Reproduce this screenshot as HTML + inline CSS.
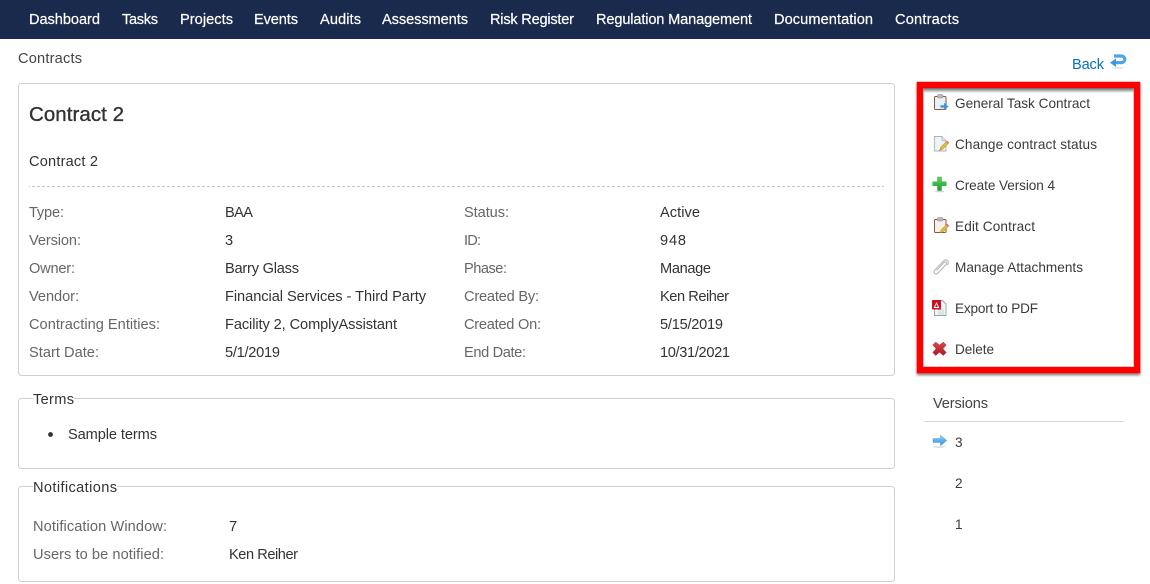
<!DOCTYPE html>
<html lang="en">
<head>
<meta charset="utf-8">
<title>Contracts</title>
<style>
html,body{margin:0;padding:0;width:1150px;height:584px;overflow:hidden;background:#fff}
svg{display:block;position:absolute;left:0;top:0}
text{font-family:"Liberation Sans",sans-serif;font-size:14.6px;fill:#333}
.n{fill:#fff;stroke:#fff;stroke-width:.2}
.l{fill:#666}
.v{fill:#333}
.s{font-size:13.6px;fill:#3a3a3a}
</style>
</head>
<body>
<svg width="1150" height="584" viewBox="0 0 1150 584" xmlns="http://www.w3.org/2000/svg">
<defs>
<filter id="sh" x="-10%" y="-10%" width="120%" height="120%"><feDropShadow dx="0" dy="2" stdDeviation="1.200" flood-color="#000" flood-opacity=".5"/></filter>
<linearGradient id="blue" x1="0" y1="0" x2="0" y2="1"><stop offset="0" stop-color="#8fd0f5"/><stop offset="1" stop-color="#2f8fdc"/></linearGradient>
<linearGradient id="green" x1="0" y1="0" x2="0" y2="1"><stop offset="0" stop-color="#5fd35f"/><stop offset="1" stop-color="#1f9e32"/></linearGradient>
<linearGradient id="red" x1="0" y1="0" x2="0" y2="1"><stop offset="0" stop-color="#d84a4a"/><stop offset="1" stop-color="#a81822"/></linearGradient>
<linearGradient id="topsh" x1="0" y1="0" x2="0" y2="1"><stop offset="0" stop-color="#666"/><stop offset="1" stop-color="#fff"/></linearGradient>
</defs>

<rect x="0" y="0" width="1150" height="39" fill="#192a4d"/>
<text class="n" x="29" y="24" textLength="71">Dashboard</text>
<text class="n" x="122" y="24" textLength="36">Tasks</text>
<text class="n" x="180" y="24" textLength="53">Projects</text>
<text class="n" x="254" y="24" textLength="44">Events</text>
<text class="n" x="320" y="24" textLength="41">Audits</text>
<text class="n" x="382" y="24" textLength="86">Assessments</text>
<text class="n" x="490" y="24" textLength="84">Risk Register</text>
<text class="n" x="596" y="24" textLength="156">Regulation Management</text>
<text class="n" x="774" y="24" textLength="99">Documentation</text>
<text class="n" x="895" y="24" textLength="64">Contracts</text>

<text x="18" y="63" textLength="64" style="fill:#444">Contracts</text>
<text x="1072" y="69" textLength="32" style="fill:#0a6ebd">Back</text>
<g>
<path d="M1114 56h7.500a3.300 3.300 0 0 1 0 6.600h-6.500" fill="none" stroke="#4aa5e8" stroke-width="3.200"/>
<path d="M1110 62.700l6-4.300v8.600z" fill="#3d97dc"/>
<ellipse cx="1118" cy="68" rx="6" ry=".8" fill="#ccc" opacity=".6"/>
</g>

<rect x="18.500" y="83.500" width="876" height="292" rx="3" fill="#fff" stroke="#d0d0d0"/>
<text x="29" y="121" textLength="95" style="font-size:20.500px;fill:#333;stroke:#333;stroke-width:.35">Contract 2</text>
<text x="29" y="166" textLength="69">Contract 2</text>
<line x1="29" y1="186.500" x2="884" y2="186.500" stroke="#c4c4c4" stroke-dasharray="3 2" stroke-dashoffset="2"/>

<text class="l" x="29" y="217" textLength="35">Type:</text>
<text class="v" x="225" y="217" textLength="28">BAA</text>
<text class="l" x="464" y="217" textLength="45">Status:</text>
<text class="v" x="660" y="217" textLength="40">Active</text>

<text class="l" x="29" y="245" textLength="52">Version:</text>
<text class="v" x="225" y="245" textLength="8">3</text>
<text class="l" x="464" y="245" textLength="17">ID:</text>
<text class="v" x="660" y="245" textLength="26">948</text>

<text class="l" x="29" y="273" textLength="46">Owner:</text>
<text class="v" x="225" y="273" textLength="74">Barry Glass</text>
<text class="l" x="464" y="273" textLength="43">Phase:</text>
<text class="v" x="660" y="273" textLength="51">Manage</text>

<text class="l" x="29" y="301" textLength="50">Vendor:</text>
<text class="v" x="225" y="301" textLength="201">Financial Services - Third Party</text>
<text class="l" x="464" y="301" textLength="75">Created By:</text>
<text class="v" x="660" y="301" textLength="69">Ken Reiher</text>

<text class="l" x="29" y="329" textLength="131">Contracting Entities:</text>
<text class="v" x="225" y="329" textLength="172">Facility 2, ComplyAssistant</text>
<text class="l" x="464" y="329" textLength="77">Created On:</text>
<text class="v" x="660" y="329" textLength="63">5/15/2019</text>

<text class="l" x="29" y="357" textLength="70">Start Date:</text>
<text class="v" x="225" y="357" textLength="55">5/1/2019</text>
<text class="l" x="464" y="357" textLength="62">End Date:</text>
<text class="v" x="660" y="357" textLength="70">10/31/2021</text>

<rect x="18.500" y="398.500" width="876" height="70" rx="3" fill="#fff" stroke="#d0d0d0"/>
<rect x="33" y="395" width="41" height="8" fill="#fff"/>
<text x="33" y="404" textLength="41">Terms</text>
<circle cx="50.500" cy="434.500" r="2.400" fill="#333"/>
<text x="68" y="439" textLength="89">Sample terms</text>

<rect x="18.500" y="486.500" width="876" height="95" rx="3" fill="#fff" stroke="#d0d0d0"/>
<rect x="33" y="483" width="84" height="8" fill="#fff"/>
<text x="33" y="492" textLength="84">Notifications</text>
<text class="l" x="33" y="531" textLength="134">Notification Window:</text>
<text class="v" x="229" y="531" textLength="8">7</text>
<text class="l" x="33" y="559" textLength="131">Users to be notified:</text>
<text class="v" x="229" y="559" textLength="69">Ken Reiher</text>

<rect x="920" y="85" width="217" height="285" fill="#fff" stroke="#f00" stroke-width="6.500" filter="url(#sh)"/>
<rect x="923.500" y="88" width="210" height="5" fill="url(#topsh)"/>

<text class="s" x="955" y="108" textLength="135">General Task Contract</text>
<text class="s" x="955" y="149" textLength="142">Change contract status</text>
<text class="s" x="955" y="190" textLength="100">Create Version 4</text>
<text class="s" x="955" y="231" textLength="80">Edit Contract</text>
<text class="s" x="955" y="272" textLength="128">Manage Attachments</text>
<text class="s" x="955" y="313" textLength="83">Export to PDF</text>
<text class="s" x="955" y="354" textLength="39">Delete</text>

<!-- clipboard arrow -->
<g>
<rect x="934.500" y="96.500" width="11.500" height="13" rx="1" fill="#eaf1f5" stroke="#8a5a3c"/>
<rect x="937.500" y="94.500" width="5.500" height="3.500" rx="1" fill="#b9b9b9" stroke="#888" stroke-width=".5"/>
<path d="M940.500 105.200h3.500v-2.500l4.500 3.800-4.500 3.800v-2.500h-3.500z" fill="#3d97dc"/>
</g>
<!-- document pencil -->
<g>
<path d="M934.500 136.500h7.500l4 4v10.500h-11.500z" fill="#eef3f6" stroke="#a8b4ba" stroke-width=".9"/>
<path d="M942 136.500v4h4" fill="#dfe6ea" stroke="#a8b4ba" stroke-width=".7"/>
<path d="M939.500 150.500l1.300-3.400 5.400-5.400 2 2-5.400 5.400z" fill="#e9b83a" stroke="#8a6a20" stroke-width=".4"/>
<path d="M946.200 141.700l2 2 .9-.9-2-2z" fill="#e0607a"/>
</g>
<!-- plus -->
<g>
<path d="M937.500 177h4v4.800h4.800v4h-4.800v4.800h-4v-4.800h-4.800v-4h4.800z" fill="url(#green)" stroke="#23a03a" stroke-width=".4" stroke-linejoin="round"/>
<ellipse cx="939.500" cy="191.500" rx="5" ry=".8" fill="#bbb" opacity=".6"/>
</g>
<!-- clipboard pencil -->
<g>
<rect x="934.500" y="219.500" width="11.500" height="13" rx="1" fill="#f2f2ea" stroke="#8a5a3c"/>
<rect x="937.500" y="217.500" width="5.500" height="3.500" rx="1" fill="#b9b9b9" stroke="#888" stroke-width=".5"/>
<path d="M940 233l1.200-3.300 5-5 2 2-5 5z" fill="#e9b83a" stroke="#8a6a20" stroke-width=".4"/>
<path d="M946.200 224.700l2 2 .9-.9-2-2z" fill="#e0607a"/>
</g>
<!-- paperclip -->
<path d="M937 270l7-7.500c1.600-1.700 3.500.3 2 2l-8.200 8.700c-2.200 2.300-5.300-.6-3.100-2.900l8.800-9.300c2.900-3 6.700.8 3.900 3.800" fill="none" stroke="#bdbdbd" stroke-width="1.200" stroke-linecap="round"/>
<!-- pdf -->
<g>
<path d="M934.500 300.500h8l3.500 3.500v11.500h-11.500z" fill="#f2f6f7" stroke="#8fa5a8" stroke-width=".9"/>
<path d="M938 310h6M938 312h6M938 314h6" stroke="#b9c6c8" stroke-width=".7"/>
<rect x="932" y="300" width="9" height="9.500" rx=".8" fill="#cc1020"/>
<path d="M934.300 307.500l2.200-4.500 2.200 4.500z" fill="none" stroke="#fff" stroke-width=".9"/>
</g>
<!-- delete -->
<g>
<path d="M935.700 342l3.800 3 3.800-3 3 3-3.300 3.700 3.300 3.800-3 3-3.800-3.200-3.800 3.200-3-3 3.300-3.800-3.300-3.700z" fill="url(#red)" stroke="#a81822" stroke-width=".3"/>
</g>

<text x="933" y="408" textLength="55" style="fill:#444">Versions</text>
<line x1="925" y1="421.500" x2="1123" y2="421.500" stroke="#d4d4d4"/>
<path d="M933 438.500h7.500v-3.300l6.300 5.300-6.300 5.300v-3.300H933z" fill="url(#blue)" stroke="#3d97dc" stroke-width=".4"/>
<ellipse cx="939" cy="447" rx="6" ry=".8" fill="#bbb" opacity=".6"/>
<text class="s" x="955" y="447" textLength="8">3</text>
<text class="s" x="955" y="488" textLength="8">2</text>
<text class="s" x="955" y="529" textLength="6">1</text>
</svg>
</body>
</html>
